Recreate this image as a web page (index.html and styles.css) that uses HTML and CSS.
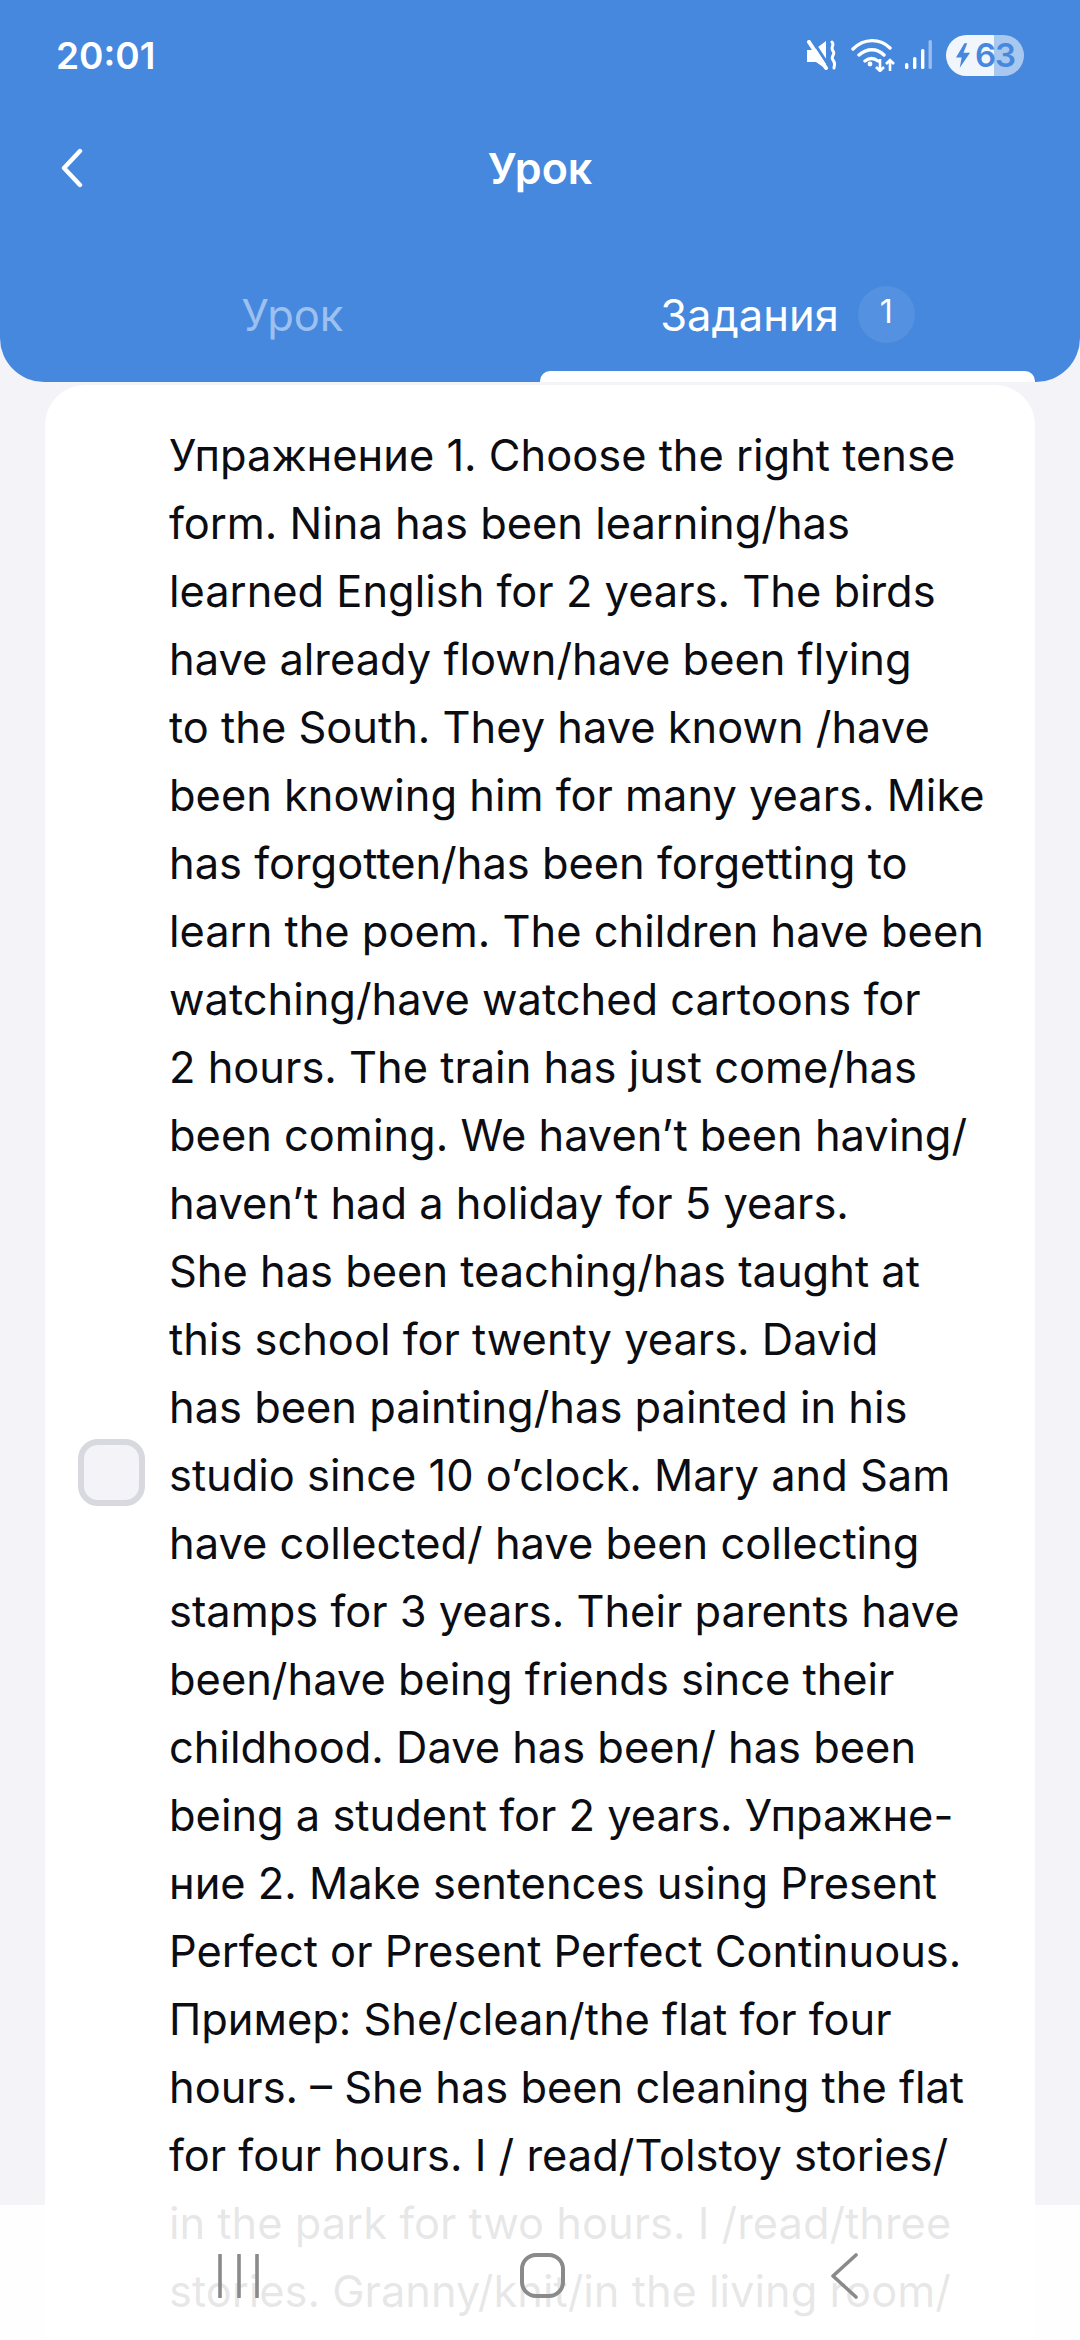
FILE: index.html
```html
<!DOCTYPE html>
<html lang="ru">
<head>
<meta charset="utf-8">
<title>Урок</title>
<link rel="stylesheet" href="styles.css">
</head>
<body>
<header class="header">
  <div class="status">
    <span class="time">20:01</span>
    <div class="status-icons">
      <svg class="i-mute" viewBox="0 0 30 30"><path d="M0 10h7l12-9v28l-10-7H0z" fill="#fff"/><path d="M5 0l19 29" stroke="#4688dd" stroke-width="3"/><path d="M1 3L5 0l19 29-3 3z" fill="#4688dd" opacity="0"/><path d="M2 2l17 26" stroke="#fff" stroke-width="4" stroke-linecap="round"/><path d="M25 2c3 3-2 5 1 9s-3 5 0 9 1 5 1 8" fill="none" stroke="#fff" stroke-width="3" stroke-linecap="round"/></svg>
      <svg class="i-wifi" viewBox="0 0 44 34"><path d="M2 11C13 0 29 0 39 10M8 17c8-7 18-7 25 0M14 23c4-3 9-3 13 0" fill="none" stroke="#fff" stroke-width="3.4" stroke-linecap="round"/><circle cx="19" cy="26" r="2.4" fill="#fff"/><path d="M29 21v12M25 29l4 4 4-4M39 33V22M35 26l4-4 4 4" fill="none" stroke="#fff" stroke-width="2.6"/></svg>
      <svg class="i-signal" viewBox="0 0 27 30"><rect x="0" y="23" width="3.4" height="6" rx="1.5" fill="#fff"/><rect x="8" y="17" width="3.4" height="12" rx="1.5" fill="#fff"/><rect x="16" y="9" width="3.4" height="20" rx="1.5" fill="#fff"/><rect x="23.5" y="0" width="3.4" height="29" rx="1.5" fill="#fff" opacity=".45"/></svg>
      <div class="battery">
        <svg class="i-bolt" viewBox="0 0 16 26"><path d="M9 0L0 15h6l-2 11 11-16H8l4-10z"/></svg>
        <span class="batt-num">63</span>
      </div>
    </div>
  </div>
  <div class="titlebar">
    <svg class="i-back" viewBox="0 0 24 40"><path d="M20 3L4 20l16 17" fill="none" stroke="#fff" stroke-width="4.4" stroke-linecap="round" stroke-linejoin="round"/></svg>
    <h1 class="title">Урок</h1>
  </div>
  <nav class="tabs">
    <div class="tab">Урок</div>
    <div class="tab tab-active">Задания <span class="badge">1</span></div>
  </nav>
</header>
<main class="card">
  <div class="row">
    <div class="checkbox"></div>
    <p class="text">Упражнение 1. Choose the right tense<br>form. Nina has been learning/has<br>learned English for 2 years. The birds<br>have already flown/have been flying<br>to the South. They have known /have<br>been knowing him for many years. Mike<br>has forgotten/has been forgetting to<br>learn the poem. The children have been<br>watching/have watched cartoons for<br>2 hours. The train has just come/has<br>been coming. We haven’t been having/<br>haven’t had a holiday for 5 years.<br>She has been teaching/has taught at<br>this school for twenty years. David<br>has been painting/has painted in his<br>studio since 10 o’clock. Mary and Sam<br>have collected/ have been collecting<br>stamps for 3 years. Their parents have<br>been/have being friends since their<br>childhood. Dave has been/ has been<br>being a student for 2 years. Упражне-<br>ние 2. Make sentences using Present<br>Perfect or Present Perfect Continuous.<br>Пример: She/clean/the flat for four<br>hours. – She has been cleaning the flat<br>for four hours. I / read/Tolstoy stories/<br>in the park for two hours. I /read/three<br>stories. Granny/knit/in the living room/</p>
  </div>
</main>
<footer class="navbar">
  <svg class="i-recent" viewBox="0 0 42 44"><path d="M2 1v42M21 1v42M39 1v42" stroke="#8a8a8a" stroke-width="3.6" fill="none" stroke-linecap="round"/></svg>
  <div class="i-home"></div>
  <svg class="i-navback" viewBox="0 0 28 46"><path d="M26 2L3 23l23 21" stroke="#8a8a8a" stroke-width="3.6" fill="none" stroke-linecap="round" stroke-linejoin="round"/></svg>
</footer>
</body>
</html>
```
FILE: styles.css
```css
* { box-sizing: border-box; }
html, body { margin: 0; height: 2340px; overflow: hidden; }
body { background: #f3f3f8; font-family: Inter, "Liberation Sans", sans-serif; color: #0b0d12; display: flex; flex-direction: column; }

.header { flex: none; height: 382px; background: #4688dd; border-radius: 0 0 44px 44px; color: #fff; display: flex; flex-direction: column; padding: 0 45px; }
.status { height: 110px; display: flex; align-items: center; justify-content: space-between; margin-right: 11px; margin-left: 11px; }
.time { font-size: 37px; font-weight: 600; line-height: 1; }
.status-icons { display: flex; align-items: center; }
.i-mute { width: 30px; height: 30px; margin-right: 14px; }
.i-wifi { width: 44px; height: 34px; margin-right: 10px; }
.i-signal { width: 27px; height: 30px; margin-right: 14px; }
.battery { width: 78px; height: 41px; border-radius: 21px; background: linear-gradient(to right, #f1f6fd 0 48px, #a9c8f0 48px); display: flex; align-items: center; padding-left: 10px; gap: 4px; color: #4688dd; }
.i-bolt { width: 15px; height: 25px; fill: #4688dd; }
.batt-num { font-size: 33px; font-weight: 600; line-height: 1; letter-spacing: -1px; }

.titlebar { flex: none; height: 75px; display: flex; align-items: center; justify-content: center; position: relative; margin-top: 21px; }
.i-back { position: absolute; left: 15px; top: 17px; width: 24px; height: 40px; }
.title { margin: 0; font-size: 43px; font-weight: 600; line-height: 1; }

.tabs { flex: 1; display: grid; grid-template-columns: 1fr 1fr; }
.tab { display: flex; align-items: center; justify-content: center; gap: 19px; font-size: 43.5px; line-height: 1; color: #9cc0f0; padding: 0 0 20px; margin-top: 64px; font-weight: 400; }
.tab-active { color: #fff; position: relative; }
.tab-active::after { content: ""; position: absolute; left: 0; right: 0; bottom: 0; height: 11px; background: #fff; border-radius: 10px 10px 0 0; }
.badge { width: 57px; height: 57px; border-radius: 50%; background: #5491e0; display: flex; align-items: center; justify-content: center; font-size: 32px; font-weight: 400; padding-bottom: 5px; margin-top: -3px; }

.card { flex: 1; min-height: 0; overflow: hidden; margin: 3px 45px 0; background: #fff; border-radius: 40px 40px 0 0; padding: 36px 30px 0 33px; }
.row { display: flex; align-items: center; gap: 24px; min-height: 2102px; }
.checkbox { flex: none; width: 67px; height: 67px; background: #f3f3f8; border: 6px solid #d8d9df; border-radius: 20px; }
.text { align-self: flex-start; margin: 0; font-size: 43.42px; line-height: 68px; white-space: nowrap; }

.navbar { position: fixed; left: 0; right: 0; bottom: 0; height: 135px; background: rgba(255,255,255,.9); }
.i-recent { position: absolute; left: 218px; top: 49px; width: 42px; height: 44px; }
.i-home { position: absolute; left: 520px; top: 48px; width: 45px; height: 45px; border: 4px solid #8a8a8a; border-radius: 16px; }
.i-navback { position: absolute; left: 830px; top: 48px; width: 28px; height: 46px; }
```
